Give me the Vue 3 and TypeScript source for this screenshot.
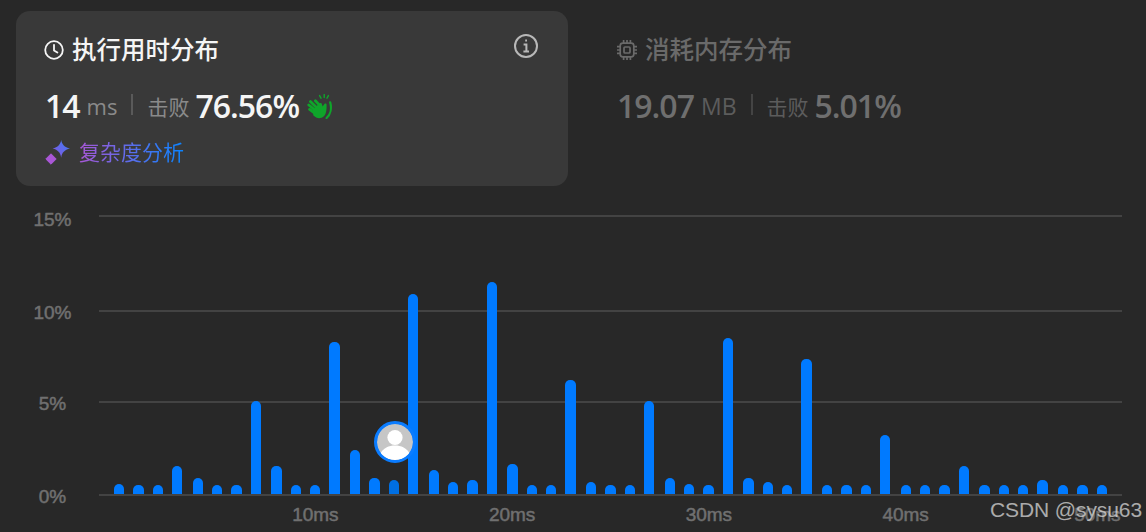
<script setup lang="ts">
const heights = [
  10.3, 8.7, 8.7, 28, 15.7, 8.7, 8.7, 92.7, 28, 8.7, 8.7, 152.3, 43.7, 15.7, 14, 199.7, 24.3,
  12, 14, 211.7, 29.7, 8.7, 8.7, 114, 12, 8.7, 8.7, 92.7, 15.7, 10.3, 8.7, 155.7, 15.7, 12,
  8.7, 134.7, 8.7, 8.7, 8.7, 59.3, 8.7, 8.7, 8.7, 28, 8.7, 8.7, 8.7, 14, 8.7, 8.7, 8.7,
]
const mine = 14
const yLabels = ['15%', '10%', '5%', '0%']
const xLabels = ['10ms', '20ms', '30ms', '40ms', '50ms']
</script>

<template>
  <div class="page">
    <div class="tabs">
      <section class="card">
        <h3 class="title">
          <svg class="ico" viewBox="0 0 20 20" fill="none" stroke="#f5f5f5" stroke-width="1.8" stroke-linecap="round" stroke-linejoin="round">
            <circle cx="10" cy="10" r="8.8" />
            <path d="M10 4.8V10.4L13.4 12.6" />
          </svg>
          执行用时分布
        </h3>
        <div class="stat">
          <b class="num">14</b>
          <span class="unit ms">ms</span>
          <i class="sep"></i>
          <span class="beat">击败</span>
          <b class="num pct">76.56%</b>
          <svg class="clap" viewBox="0 0 25 25">
            <g stroke="#0fa52a" fill="none" stroke-linecap="round">
              <path d="M12.6 1.6L14 4.2M17.2.6V3.6M21.4 1.6L20 4.2" stroke-width="1.4" />
              <path d="M23.2 8.4C24.8 14 23.6 20.4 19.6 24" stroke-width="2.2" />
            </g>
            <g stroke="#0fa52a" fill="none" stroke-linecap="round">
              <path d="M9 13L3.4 7.6M8 16L1.8 11M8 19.4L2.6 15.4M12 10.6L8.4 6.8" stroke-width="2.8" />
            </g>
            <path d="M5.6 16.4L12 9.6C13.2 8.6 14.6 9 15 10.4L15.6 12.6L17.6 9.8C18.6 9 19.8 9.6 19.6 11C19.6 15.4 19.6 19.6 16.6 22.6C13.6 25 9.4 24.6 6.4 21.6Z" fill="#0fa52a" />
          </svg>
        </div>
        <a class="analyze">
          <svg class="spark" viewBox="0 0 25 27">
            <defs>
              <linearGradient id="sparkFill" x1="0" y1="1" x2="1" y2="0">
                <stop offset="0" stop-color="#8a52e0" />
                <stop offset="1" stop-color="#3a80f6" />
              </linearGradient>
            </defs>
            <path d="M16.2 1C17 5.6 19.4 8.2 25 9.6C19.4 11 17 13.6 16.2 18.8C15.4 13.6 13 11 7.6 9.6C13 8.2 15.4 5.6 16.2 1Z" fill="url(#sparkFill)" />
            <path d="M6 14.8L11.2 20L6 25.2L.8 20Z" fill="#a957d6" stroke="#a957d6" stroke-linejoin="round" />
          </svg>
          <span class="analyze-text">复杂度分析</span>
        </a>
        <svg class="info" viewBox="0 0 24 24" fill="none" stroke="#b8b8b8">
          <circle cx="12" cy="12" r="11" stroke-width="2" />
          <path d="M9.6 10.6H12.4V17M9.4 17.4H15M11.2 6.6H13" stroke-width="2" />
        </svg>
      </section>
      <section class="panel">
        <h3 class="title dim-title">
          <svg class="ico" viewBox="0 0 20 20" fill="none" stroke="#6a6a6a" stroke-width="1.7">
            <rect x="3.2" y="3.2" width="13.6" height="13.6" rx="2.6" />
            <rect x="7" y="7" width="6" height="6" rx="1" />
            <path d="M6.6 0V3M10 0V3M13.4 0V3M6.6 17V20M10 17V20M13.4 17V20M0 6.6H3M0 10H3M0 13.4H3M17 6.6H20M17 10H20M17 13.4H20" />
          </svg>
          消耗内存分布
        </h3>
        <div class="stat dim">
          <b class="num">19.07</b>
          <span class="unit">MB</span>
          <i class="sep"></i>
          <span class="beat">击败</span>
          <b class="num pct">5.01%</b>
        </div>
      </section>
    </div>

    <div class="chart">
      <div class="y-axis">
        <span v-for="l in yLabels" :key="l">{{ l }}</span>
      </div>
      <div class="plot">
        <div class="grid-lines">
          <i v-for="l in yLabels" :key="l"></i>
        </div>
        <div class="bars">
          <span
            v-for="(h, i) in heights"
            :key="i"
            class="bar"
            :class="{ 'new-group': i > 0 && i % 4 === 0, mine: i === mine }"
            :style="{ height: h + 'px' }"
          ></span>
        </div>
        <div class="avatar">
          <svg viewBox="0 0 36 36">
            <circle cx="18" cy="18" r="18" fill="#c6c6c6" />
            <circle cx="18" cy="13.5" r="7.6" fill="#fff" />
            <path d="M3 30C6 24 12 21.5 18 21.5S30 24 33 30C29 34 24 36 18 36S7 34 3 30Z" fill="#fff" />
          </svg>
        </div>
      </div>
      <div class="x-axis">
        <span v-for="l in xLabels" :key="l">{{ l }}</span>
      </div>
    </div>

    <div class="watermark">CSDN @sysu63</div>
  </div>
</template>

<style>
html, body { margin: 0; background: #282828; }
</style>

<style scoped>
.page {
  position: relative;
  width: 1146px;
  height: 532px;
  overflow: hidden;
  background: #282828;
  font-family: "Open Sans", "Noto Sans CJK SC", sans-serif;
}
.tabs {
  display: flex;
  padding: 11px 0 0 16px;
}
.card {
  position: relative;
  box-sizing: border-box;
  width: 552px;
  height: 175px;
  padding: 23px 0 0 28px;
  border-radius: 14px;
  background: #393939;
}
.panel {
  padding: 23px 0 0 49px;
}
.title {
  display: flex;
  align-items: center;
  gap: 8px;
  height: 32px;
  margin: 0;
  font-size: 24.5px;
  font-weight: 500;
  line-height: 32px;
  color: #f5f5f5;
}
.dim-title { color: #6a6a6a; }
.ico {
  width: 20px;
  height: 20px;
  flex: none;
}
.stat {
  display: flex;
  align-items: center;
  height: 44px;
  margin: 18px 0 0 1px;
  color: #f5f5f5;
}
.dim { color: #6f6f6f; margin-left: 0; }
.num {
  font-size: 32px;
  font-weight: 600;
  line-height: 44px;
  letter-spacing: -1px;
}
.unit {
  margin-left: 7px;
  font-size: 23px;
  color: #8a8a8a;
}
.unit.ms { font-size: 22px; }
.dim .unit, .dim .beat { color: #5c5c5c; }
.sep {
  width: 2px;
  height: 21px;
  margin: 0 14px 3px 14px;
  background: #5a5a5a;
}
.dim .sep { background: #444; }
.beat {
  font-size: 21px;
  color: #8a8a8a;
}
.pct { margin-left: 6px; }
.clap {
  width: 25px;
  height: 25px;
  margin-left: 8px;
}
.analyze {
  display: flex;
  align-items: center;
  gap: 9px;
  margin: 9px 0 0 1px;
}
.spark {
  width: 25px;
  height: 27px;
  flex: none;
}
.analyze-text {
  font-size: 21px;
  line-height: 30px;
  background: linear-gradient(90deg, #a957d6 0%, #0a84ff 100%);
  -webkit-background-clip: text;
  background-clip: text;
  color: transparent;
}
.info {
  position: absolute;
  top: 23px;
  right: 30px;
  width: 24px;
  height: 24px;
}
.chart {
  display: grid;
  grid-template-columns: 99px 1023px;
  margin-top: 29px;
  font-family: "Liberation Sans", Arial, sans-serif;
  font-size: 19px;
  line-height: 20px;
  color: #707070;
  -webkit-text-stroke: 0.5px #707070;
}
.y-axis {
  display: flex;
  flex-direction: column;
  align-items: center;
  padding: 0 0 0 6px;
  margin-top: -5px;
  height: 20px;
}
.y-axis span:nth-child(2) { margin-top: 73px; }
.y-axis span:nth-child(3) { margin-top: 71px; }
.y-axis span:nth-child(4) { margin-top: 73px; }
.plot {
  position: relative;
  display: grid;
  height: 281px;
}
.grid-lines {
  grid-area: 1 / 1;
  display: flex;
  flex-direction: column;
}
.grid-lines i {
  height: 2px;
  background: #434343;
}
.grid-lines i:nth-child(2) { margin-top: 93px; }
.grid-lines i:nth-child(3) { margin-top: 89px; }
.grid-lines i:nth-child(4) { margin-top: 91px; }
.bars {
  grid-area: 1 / 1;
  display: flex;
  align-items: flex-end;
  gap: 9px;
  padding: 0 0 2px 15px;
}
.bar {
  width: 10.33px;
  flex: none;
  border-radius: 5px 5px 0 0;
  background: #007aff;
}
.bar.new-group { margin-left: 1.37px; }
.bar.mine { background: #006fe3; }
.avatar {
  position: absolute;
  left: 274.5px;
  top: 205.5px;
  width: 36px;
  height: 36px;
  border: 3.5px solid #0a7cff;
  border-radius: 50%;
  overflow: hidden;
  background: #0a7cff;
}
.avatar svg { display: block; width: 100%; height: 100%; }
.x-axis {
  grid-column: 2;
  display: grid;
  grid-template-columns: repeat(5, 196.75px);
  justify-content: start;
  justify-items: center;
  margin: 9px 0 0 118px;
}
.x-axis span:last-child { margin-right: 10px; }
.watermark {
  position: absolute;
  left: 990px;
  top: 496px;
  font-family: "Liberation Sans", Arial, sans-serif;
  font-size: 21px;
  letter-spacing: -0.1px;
  line-height: 28px;
  color: rgba(225, 225, 225, 0.72);
  white-space: nowrap;
}
</style>
